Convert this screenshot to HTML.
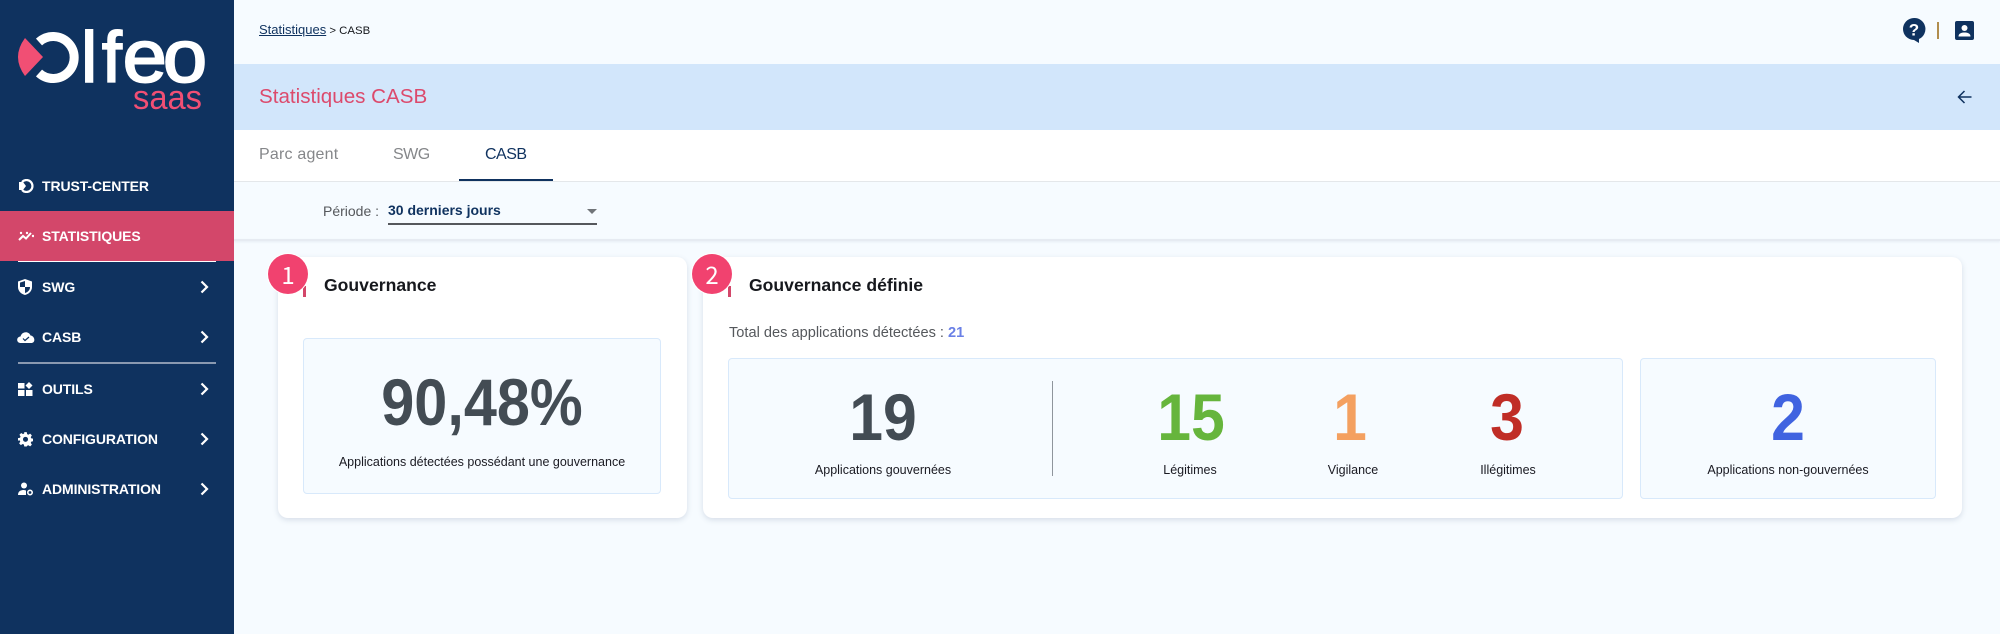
<!DOCTYPE html>
<html lang="fr"><head><meta charset="utf-8"><title>Statistiques CASB</title>
<style>
html,body{margin:0;padding:0}
body{width:2000px;height:634px;overflow:hidden;background:#f6fbff;font-family:"Liberation Sans",sans-serif;position:relative}
.a{position:absolute;white-space:nowrap}
.side{left:0;top:0;width:234px;height:634px;background:#0f325f}
.nav{left:42px;color:#fff;font-weight:700;font-size:14px;line-height:20px;letter-spacing:-.1px}
.ic{position:absolute;left:18px}
.chev{position:absolute;left:200px}
.card{background:#fff;border-radius:10px;box-shadow:0 2px 6px rgba(70,90,130,.18)}
.box{background:#f6fbff;border:1px solid #d8e9fb;border-radius:4px;box-sizing:border-box}
.num{font-weight:700;font-size:66px;line-height:70px;text-align:center;transform:translateX(-50%) scaleX(.92)}
.lab{font-size:12.5px;line-height:16px;color:#1a1a22;transform:translateX(-50%)}
.ttl{font-weight:700;font-size:17.6px;line-height:22px;color:#16181d}
.badge{width:40px;height:40px;border-radius:50%;background:#f1426f;color:#fff;font-size:24px;line-height:40px;text-align:center;box-shadow:0 0 0 1px #fff;font-family:"Noto Sans CJK JP",sans-serif}
.tick{width:3px;height:11px;background:#d3476a}
</style></head><body>
<div class="a side"></div>
<svg class="a" style="left:0;top:0" width="234" height="130" viewBox="0 0 234 130">
<path d="M25 38 L43 57 L25 76 Q11 57 25 38Z" fill="#f14f74"/>
<path d="M39 42 A21 21 0 1 1 39 73" fill="none" stroke="#fff" stroke-width="9"/>
<g font-family="Liberation Sans" fill="#fff" stroke="#fff" stroke-width="2">
<text x="81.2" y="82" font-size="71">l</text>
<text x="102" y="82" font-size="71">f</text>
<text x="122.8" y="82" font-size="74" textLength="44" lengthAdjust="spacingAndGlyphs">e</text>
<text x="163" y="82" font-size="74" textLength="44" lengthAdjust="spacingAndGlyphs">o</text>
</g>
<text x="133" y="109" font-family="Liberation Sans" font-size="34" fill="#f14f74" textLength="69" lengthAdjust="spacingAndGlyphs">saas</text>
</svg>
<div class="a" style="left:0;top:211px;width:234px;height:50px;background:#d3476a"></div>
<div class="a" style="left:18px;top:261px;width:198px;height:1px;background:#fff"></div>
<div class="a" style="left:18px;top:362px;width:198px;height:2px;background:#8a99b0"></div>
<div class="a nav" style="top:176px">TRUST-CENTER</div>
<div class="a nav" style="top:226px">STATISTIQUES</div>
<div class="a nav" style="top:277px">SWG</div>
<div class="a nav" style="top:327px">CASB</div>
<div class="a nav" style="top:379px">OUTILS</div>
<div class="a nav" style="top:429px">CONFIGURATION</div>
<div class="a nav" style="top:479px">ADMINISTRATION</div>
<svg class="ic" style="top:179px" width="16" height="14" viewBox="0 0 16 14"><path d="M4 3 A6 6 0 1 1 4 11" fill="none" stroke="#fff" stroke-width="2.2"/><path d="M1 3 H5 L8 7 L5 11 H1Z" fill="#fff"/></svg>
<svg class="ic" style="top:230px" width="16" height="12" viewBox="0 0 16 12"><path d="M1 10 L5 6 L8 8.5 L13 3" fill="none" stroke="#fff" stroke-width="2"/><circle cx="3" cy="3" r="1.2" fill="#fff"/><circle cx="9" cy="3" r="1.2" fill="#fff"/><circle cx="15" cy="6" r="1.2" fill="#fff"/></svg>
<svg class="ic" style="top:279px" width="14" height="16" viewBox="0 0 14 16"><path d="M7 0 L14 2.5 V8 C14 12 11 15 7 16 C3 15 0 12 0 8 V2.5Z" fill="#fff"/><path d="M7 2 V8 H2 V3.6Z M7 8 H12 C12 11 10 13 7 14Z" fill="#0f325f"/></svg>
<svg class="ic" style="left:17px;top:331px" width="18" height="12" viewBox="0 0 18 12"><path d="M4 12 C-1 12 -1 6 3.5 5.5 C5 0 12 0 13.5 4.5 C18 5 19 12 14 12Z" fill="#fff"/><path d="M6 7.5 L8 9.5 L12 6" fill="none" stroke="#0f325f" stroke-width="1.2"/></svg>
<svg class="ic" style="top:382px" width="15" height="14" viewBox="0 0 15 14"><rect x="0" y="1" width="6.5" height="5.5" fill="#fff"/><rect x="0" y="8" width="6.5" height="6" fill="#fff"/><rect x="8" y="8" width="6.5" height="6" fill="#fff"/><path d="M11 0 L14.5 3.5 L11 7 L7.5 3.5Z" fill="#fff"/></svg>
<svg class="ic" style="top:431px" width="15" height="16" viewBox="0 0 24 24"><path fill="#fff" fill-rule="evenodd" d="M10 1h4l.6 3.2 2 .9 2.8-1.8 2.8 2.8-1.8 2.8.9 2 3.2.6v4l-3.2.6-.9 2 1.8 2.8-2.8 2.8-2.8-1.8-2 .9L14 24h-4l-.6-3.2-2-.9-2.8 1.8-2.8-2.8 1.8-2.8-.9-2L0 14.5v-4l3.2-.6.9-2L2.3 5.1l2.8-2.8 2.8 1.8 2-.9zM12 8.5a4 4 0 1 0 0 8 4 4 0 0 0 0-8z"/></svg>
<svg class="ic" style="top:482px" width="16" height="14" viewBox="0 0 16 14"><circle cx="6" cy="3.5" r="3" fill="#fff"/><path d="M0 13 C0 9 3 8 6 8 L8 8.5 V13Z" fill="#fff"/><circle cx="12" cy="10.5" r="2.2" fill="none" stroke="#fff" stroke-width="1.6"/></svg>
<svg class="chev" style="top:280px" width="9" height="14" viewBox="0 0 9 14"><path d="M1.5 1.5 L7 7 L1.5 12.5" fill="none" stroke="#fff" stroke-width="2.2"/></svg>
<svg class="chev" style="top:330px" width="9" height="14" viewBox="0 0 9 14"><path d="M1.5 1.5 L7 7 L1.5 12.5" fill="none" stroke="#fff" stroke-width="2.2"/></svg>
<svg class="chev" style="top:382px" width="9" height="14" viewBox="0 0 9 14"><path d="M1.5 1.5 L7 7 L1.5 12.5" fill="none" stroke="#fff" stroke-width="2.2"/></svg>
<svg class="chev" style="top:432px" width="9" height="14" viewBox="0 0 9 14"><path d="M1.5 1.5 L7 7 L1.5 12.5" fill="none" stroke="#fff" stroke-width="2.2"/></svg>
<svg class="chev" style="top:482px" width="9" height="14" viewBox="0 0 9 14"><path d="M1.5 1.5 L7 7 L1.5 12.5" fill="none" stroke="#fff" stroke-width="2.2"/></svg>

<div class="a" style="left:259px;top:22px;font-size:11.4px;line-height:16px;color:#16181d"><span style="text-decoration:underline;color:#0f325f;font-size:13px">Statistiques</span> &gt; CASB</div>
<svg class="a" style="left:1902px;top:17px" width="24" height="27" viewBox="0 0 24 27"><path d="M12 1 A11 11 0 1 0 12 23 L17 26 L17 22 A11 11 0 0 0 12 1Z" fill="#0f325f"/><text x="12" y="18.5" text-anchor="middle" font-family="Liberation Sans" font-weight="700" font-size="17" fill="#fff">?</text></svg>
<div class="a" style="left:1937px;top:22px;width:2px;height:17px;background:#b08d4e"></div>
<svg class="a" style="left:1955px;top:21px" width="19" height="19" viewBox="0 0 19 19"><rect width="19" height="19" rx="2" fill="#0f325f"/><circle cx="9.5" cy="7" r="3" fill="#fff"/><path d="M3.5 15.5 C3.5 12 7 11.5 9.5 11.5 C12 11.5 15.5 12 15.5 15.5Z" fill="#fff"/></svg>

<div class="a" style="left:234px;top:64px;width:1766px;height:66px;background:#d2e6fb"></div>
<div class="a" style="left:259px;top:86px;font-size:20.6px;line-height:22px;color:#dc4a6c">Statistiques CASB</div>
<svg class="a" style="left:1957px;top:90px" width="15" height="14" viewBox="0 0 15 14"><path d="M14.5 7 H2 M7.5 1 L1.5 7 L7.5 13" fill="none" stroke="#0f325f" stroke-width="1.5"/></svg>

<div class="a" style="left:234px;top:130px;width:1766px;height:51px;background:#fff;border-bottom:1px solid #e4e7ea"></div>
<div class="a" style="left:259px;top:145px;font-size:16px;line-height:20px;color:#85878a;letter-spacing:.2px">Parc agent</div>
<div class="a" style="left:393px;top:145px;font-size:16px;line-height:20px;color:#85878a;letter-spacing:-.5px">SWG</div>
<div class="a" style="left:485px;top:145px;font-size:16px;line-height:20px;color:#0f325f;letter-spacing:-.5px">CASB</div>
<div class="a" style="left:459px;top:179px;width:94px;height:2px;background:#0f325f"></div>

<div class="a" style="left:323px;top:202px;font-size:14px;line-height:18px;color:#55585c">Période :</div>
<div class="a" style="left:388px;top:201px;font-size:14px;font-weight:700;line-height:18px;color:#0f325f">30 derniers jours</div>
<div class="a" style="left:388px;top:223px;width:209px;height:1.5px;background:#55585c"></div>
<div class="a" style="left:587px;top:209px;width:0;height:0;border-left:5px solid transparent;border-right:5px solid transparent;border-top:5px solid #707478"></div>
<div class="a" style="left:234px;top:239px;width:1766px;height:2px;background:#e6ebf2;box-shadow:0 1px 2px rgba(80,100,140,.1)"></div>

<div class="a card" style="left:278px;top:257px;width:409px;height:261px"></div>
<div class="a tick" style="left:303px;top:286px"></div>
<div class="a ttl" style="left:324px;top:274px">Gouvernance</div>
<div class="a box" style="left:303px;top:338px;width:358px;height:156px"></div>
<div class="a num" style="left:482px;top:367px;color:#434c54;transform:translateX(-50%) scaleX(.9)">90,48%</div>
<div class="a lab" style="left:482px;top:454px">Applications détectées possédant une gouvernance</div>

<div class="a card" style="left:703px;top:257px;width:1259px;height:261px"></div>
<div class="a tick" style="left:728px;top:286px"></div>
<div class="a ttl" style="left:749px;top:274px">Gouvernance définie</div>
<div class="a" style="left:729px;top:324px;font-size:14.6px;line-height:18px;color:#55585c">Total des applications détectées : <b style="color:#6a80e6">21</b></div>
<div class="a box" style="left:728px;top:358px;width:895px;height:141px"></div>
<div class="a box" style="left:1640px;top:358px;width:296px;height:141px"></div>
<div class="a" style="left:1052px;top:381px;width:1px;height:95px;background:#8f959c"></div>

<div class="a num" style="left:883px;top:382px;color:#434c54">19</div>
<div class="a lab" style="left:883px;top:462px">Applications gouvernées</div>
<div class="a num" style="left:1191px;top:382px;color:#66b53c">15</div>
<div class="a lab" style="left:1190px;top:462px">Légitimes</div>
<div class="a num" style="left:1350px;top:382px;color:#f4a060">1</div>
<div class="a lab" style="left:1353px;top:462px">Vigilance</div>
<div class="a num" style="left:1507px;top:382px;color:#c02d26">3</div>
<div class="a lab" style="left:1508px;top:462px">Illégitimes</div>
<div class="a num" style="left:1788px;top:382px;color:#4063e0">2</div>
<div class="a lab" style="left:1788px;top:462px">Applications non-gouvernées</div>

<div class="a badge" style="left:268px;top:254px">1</div>
<div class="a badge" style="left:692px;top:254px">2</div>
</body></html>
